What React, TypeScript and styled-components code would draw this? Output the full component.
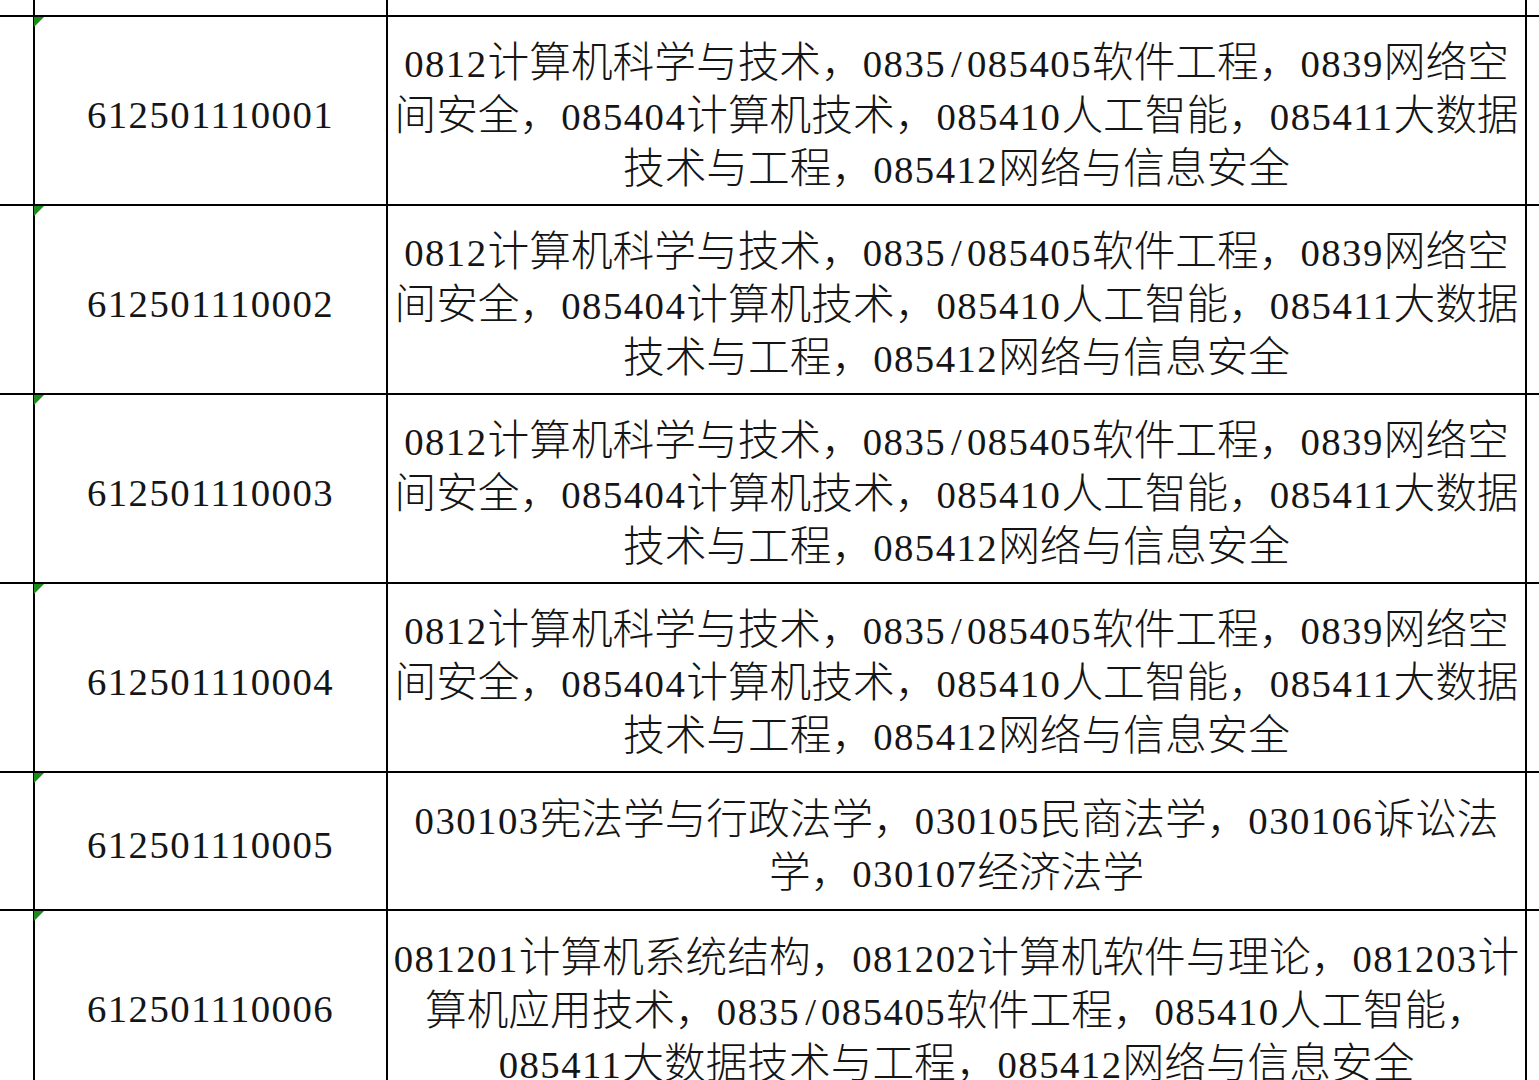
import React from "react";
import styled, { createGlobalStyle } from "styled-components";

const GlobalStyle = createGlobalStyle`
  html, body {
    margin: 0;
    padding: 0;
    background: #ffffff;
    overflow: hidden;
  }
`;

const Sheet = styled.div`
  width: 1539px;
  height: 1080px;
  overflow: hidden;
  background: #ffffff;
  color: #151515;
  font-family: "Liberation Serif", "Noto Sans CJK SC", serif;
  font-size: 41.7px;
  font-weight: 300;
`;

const Row = styled.div<{ $h: number }>`
  display: grid;
  grid-template-columns: 35px 353px 1139px 1fr;
  height: ${(p) => p.$h}px;
  border-bottom: 2px solid #000;
  box-sizing: border-box;
`;

const Cell = styled.div`
  position: relative;
  box-sizing: border-box;
  border-right: 2px solid #000;
  min-width: 0;
`;

const EdgeCell = styled.div`
  min-width: 0;
`;

const IdCell = styled(Cell)<{ $flag?: boolean }>`
  display: flex;
  align-items: center;
  justify-content: center;
  padding-top: 7px;
  line-height: 53px;
  white-space: nowrap;

  &::before {
    content: "";
    display: ${(p) => (p.$flag ? "block" : "none")};
    position: absolute;
    left: -1px;
    top: 0;
    border-top: 10px solid #1d8a1d;
    border-right: 10px solid transparent;
  }
`;

const TextCell = styled(Cell)`
  display: flex;
  flex-direction: column;
  align-items: center;
  justify-content: center;
  padding-top: 12px;
`;

const Line = styled.div`
  white-space: nowrap;
  line-height: 53px;
  text-align: center;
`;

/* half-width run: serif digits kept at a 0.5em advance, like the sheet's font */
const Digits = styled.span`
  font-size: 0.93em;
  letter-spacing: 0.0376em;
`;

const Slash = styled.span`
  display: inline-block;
  width: 0.5376em;
  letter-spacing: 0;
  text-align: center;
`;

const cs = [
  "0812计算机科学与技术，0835/085405软件工程，0839网络空",
  "间安全，085404计算机技术，085410人工智能，085411大数据",
  "技术与工程，085412网络与信息安全",
];

const rows = [
  { id: "612501110001", h: 189, lines: cs },
  { id: "612501110002", h: 189, lines: cs },
  { id: "612501110003", h: 189, lines: cs },
  { id: "612501110004", h: 189, lines: cs },
  {
    id: "612501110005",
    h: 138,
    lines: [
      "030103宪法学与行政法学，030105民商法学，030106诉讼法",
      "学，030107经济法学",
    ],
  },
  {
    id: "612501110006",
    h: 190,
    lines: [
      "081201计算机系统结构，081202计算机软件与理论，081203计",
      "算机应用技术，0835/085405软件工程，085410人工智能，",
      "085411大数据技术与工程，085412网络与信息安全",
    ],
  },
];

function renderRun(run: string, key: number) {
  const parts = run.split("/");
  return (
    <Digits key={key}>
      {parts.map((part, i) => (
        <React.Fragment key={i}>
          {i > 0 && <Slash>/</Slash>}
          {part}
        </React.Fragment>
      ))}
    </Digits>
  );
}

function renderText(text: string) {
  const out: React.ReactNode[] = [];
  const re = /[\x20-\x7e]+/g;
  let last = 0;
  let m: RegExpExecArray | null;
  let k = 0;
  while ((m = re.exec(text))) {
    if (m.index > last) out.push(text.slice(last, m.index));
    out.push(renderRun(m[0], k++));
    last = m.index + m[0].length;
  }
  if (last < text.length) out.push(text.slice(last));
  return out;
}

export default function App() {
  return (
    <>
      <GlobalStyle />
      <Sheet>
        <Row $h={17}>
          <Cell />
          <Cell />
          <Cell />
          <EdgeCell />
        </Row>
        {rows.map((row) => (
          <Row key={row.id} $h={row.h}>
            <Cell />
            <IdCell $flag>{renderText(row.id)}</IdCell>
            <TextCell>
              {row.lines.map((line, i) => (
                <Line key={i}>{renderText(line)}</Line>
              ))}
            </TextCell>
            <EdgeCell />
          </Row>
        ))}
      </Sheet>
    </>
  );
}
